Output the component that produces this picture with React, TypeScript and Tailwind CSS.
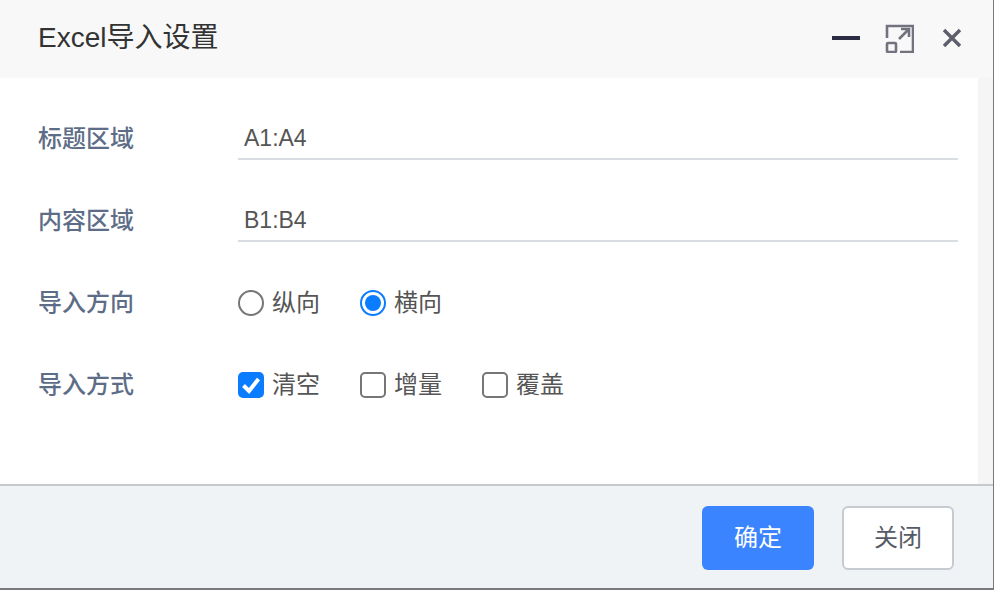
const font = "font-['Liberation_Sans','Noto_Sans_CJK_SC',sans-serif]";

function Field({ label, value }: { label: string; value: string }) {
  return (
    <div className="flex h-[82px] items-center pr-5">
      <div className="w-[200px] text-[24px] font-medium text-[#5d6d87]">{label}</div>
      <div className="h-[40px] flex-1 translate-y-[1px] border-b-2 border-[#d9dce0] pl-[6px] text-[23px] leading-[36px] text-[#555555]">
        {value}
      </div>
    </div>
  );
}

function Radio({ label, checked }: { label: string; checked?: boolean }) {
  return (
    <div className="flex w-[122px] items-center gap-[8px]">
      {checked ? (
        <div className="flex h-[26px] w-[26px] items-center justify-center rounded-full border-2 border-[#0a7cff] bg-white">
          <div className="h-[16px] w-[16px] rounded-full bg-[#0a7cff]" />
        </div>
      ) : (
        <div className="h-[26px] w-[26px] rounded-full border-2 border-[#767676] bg-white" />
      )}
      <span className="text-[24px] text-[#555555]">{label}</span>
    </div>
  );
}

function Box({ label, checked }: { label: string; checked?: boolean }) {
  return (
    <div className="flex w-[122px] items-center gap-[8px]">
      {checked ? (
        <div className="flex h-[26px] w-[26px] items-center justify-center rounded-[5px] bg-[#0a7cff]">
          <svg width="22" height="22" viewBox="0 0 22 22" fill="none" stroke="white" strokeWidth="4">
            <path d="M3.5 11.5L9 17L18.5 5" />
          </svg>
        </div>
      ) : (
        <div className="h-[26px] w-[26px] rounded-[5px] border-2 border-[#767676] bg-white" />
      )}
      <span className="text-[24px] text-[#555555]">{label}</span>
    </div>
  );
}

export default function App() {
  return (
    <div className={`${font} flex h-[590px] w-[994px] flex-col overflow-hidden border-r border-[#77797d] bg-white`}>
      {/* Header */}
      <div className="flex h-[78px] shrink-0 items-center bg-[#f8f8f8] pl-[38px]">
        <div className="flex-1 -translate-y-[1px] text-[28px] text-[#333333]">Excel导入设置</div>
        <div className="mr-[25px] h-[4px] w-[28px] translate-y-[-1px] bg-[#2c2d42]" />
        <svg width="29" height="29" viewBox="0 0 29 29" fill="none" stroke="#73737f" strokeWidth="2.6" className="mr-[28px] -translate-y-[1px]">
          <path d="M2 14V2h26v26H15" />
          <path d="M14 15L24 5M16 5h8v8" />
          <rect x="2" y="19" width="9" height="9" rx="1" />
        </svg>
        <svg width="20" height="20" viewBox="0 0 20 20" fill="none" stroke="#5d5d6b" strokeWidth="3.4" className="mr-[31px] -translate-y-[1px]">
          <path d="M2 2L18 18M18 2L2 18" />
        </svg>
      </div>

      {/* Body */}
      <div className="flex flex-1 bg-[#f5f5f5]">
        <div className="flex-1 bg-white pt-[20px] pl-[38px]">
          <Field label="标题区域" value="A1:A4" />
          <Field label="内容区域" value="B1:B4" />
          <div className="flex h-[82px] items-center">
            <div className="w-[200px] text-[24px] font-medium text-[#5d6d87]">导入方向</div>
            <Radio label="纵向" />
            <Radio label="横向" checked />
          </div>
          <div className="flex h-[82px] items-center">
            <div className="w-[200px] text-[24px] font-medium text-[#5d6d87]">导入方式</div>
            <Box label="清空" checked />
            <Box label="增量" />
            <Box label="覆盖" />
          </div>
        </div>
        <div className="w-[15px]" />
      </div>

      {/* Footer */}
      <div className="flex h-[106px] shrink-0 items-center justify-end gap-[28px] border-t-2 border-b-2 border-t-[#c9c9c9] border-b-[#77797d] bg-[#f0f3f6] pt-[2px] pr-[39px]">
        <button className="h-[64px] w-[112px] rounded-[6px] bg-[#3b84ff] text-[24px] text-white">确定</button>
        <button className="h-[64px] w-[112px] rounded-[6px] border-2 border-[#c6cad1] bg-white text-[24px] text-[#555b66]">关闭</button>
      </div>
    </div>
  );
}
